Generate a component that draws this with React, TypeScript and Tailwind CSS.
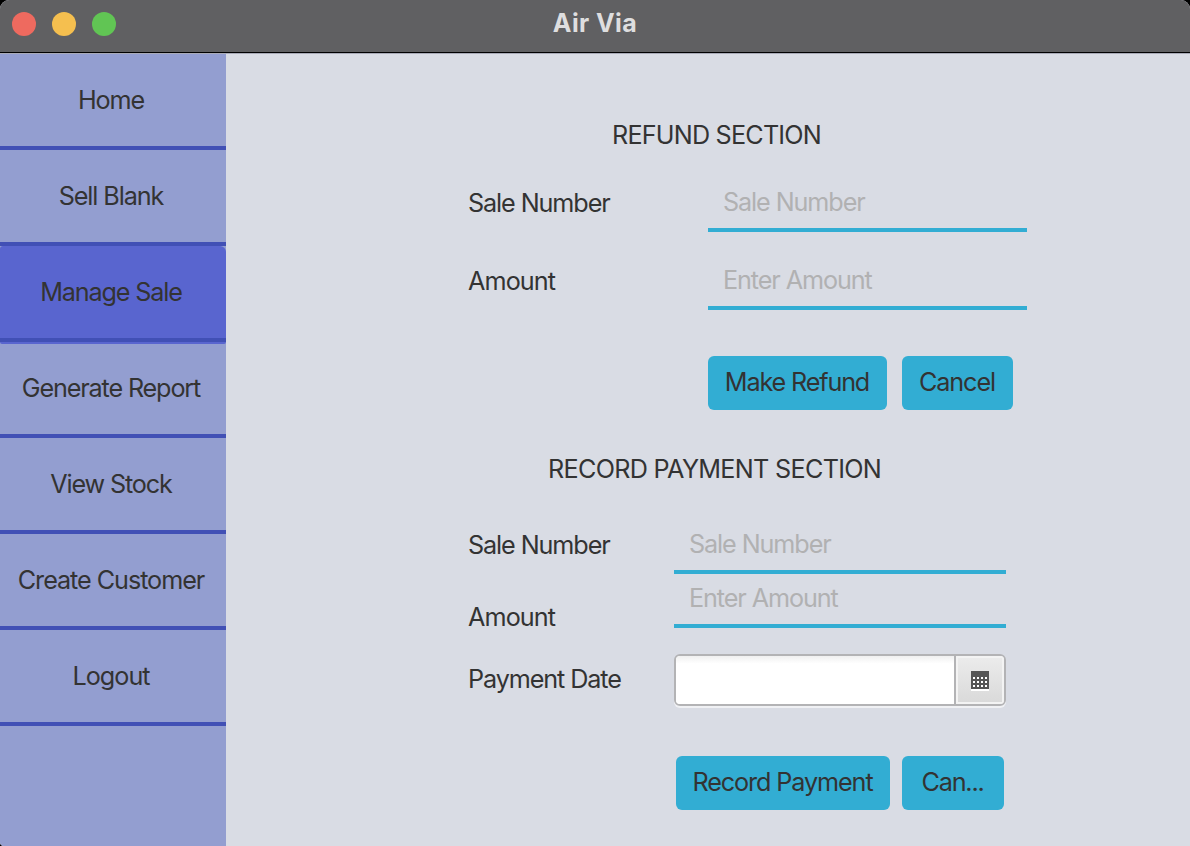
import React from 'react';

const navItems = [
  { label: 'Home', tracking: 'tracking-[-1.1px]' },
  { label: 'Sell Blank', tracking: 'tracking-[-1.1px]' },
  { label: 'Manage Sale', tracking: 'tracking-[-1.15px]', active: true },
  { label: 'Generate Report', tracking: 'tracking-[-1.15px]' },
  { label: 'View Stock', tracking: 'tracking-[-1.15px]' },
  { label: 'Create Customer', tracking: 'tracking-[-1.05px]' },
  { label: 'Logout', tracking: 'tracking-[-1px]' },
];

function TitleBar() {
  return (
    <header className="grid h-[53px] shrink-0 grid-cols-[1fr_auto_1fr] border-b border-black bg-[#606062]">
      <div className="flex items-center gap-4 pb-1 pl-3">
        <span className="size-6 rounded-full bg-[#ee6a5f]" />
        <span className="size-6 rounded-full bg-[#f5bf4f]" />
        <span className="size-6 rounded-full bg-[#61c554]" />
      </div>
      <h1 className="text-[25px] leading-[46px] font-bold tracking-[0.4px] text-[#dededf]">Air Via</h1>
    </header>
  );
}

function Sidebar() {
  return (
    <nav className="flex w-[226px] shrink-0 flex-col bg-[#939ed0]">
      {navItems.map((item) => (
        <div key={item.label} className="h-24 shrink-0">
          <button className={`block h-24 w-full border-b-4 border-[#4150b5] ${item.tracking}`}>
            <span
              className={`flex h-[92px] w-full items-center justify-center rounded-tl-[3px] rounded-tr-md pt-[2px] pr-1 ${
                item.active ? 'bg-[#5965cf]' : ''
              }`}
            >
              {item.label}
            </span>
          </button>
          {item.active && <div className="h-[2px] rounded-b-md bg-[#5965cf]" />}
        </div>
      ))}
    </nav>
  );
}

function Field({ placeholder }: { placeholder: string }) {
  return (
    <input
      placeholder={placeholder}
      className="block h-[54px] w-full border-b-4 border-[#32add3] bg-transparent pb-[2px] pl-[15px] tracking-[-1.1px] outline-none placeholder:text-[#b1b1b2]"
    />
  );
}

function ActionButton({ children, className }: { children: React.ReactNode; className: string }) {
  return (
    <button className={`flex h-[54px] items-center justify-center rounded-md bg-[#32add3] pr-px ${className}`}>
      {children}
    </button>
  );
}

function CalendarIcon() {
  return (
    <svg width="18" height="20" viewBox="0 0 18 20" shapeRendering="crispEdges">
      <rect y="2" width="18" height="18" fill="#fff" />
      <rect width="18" height="18" fill="#555" />
      {[6, 10, 14].map((y) =>
        [2, 6, 10, 14].map((x) => <rect key={`${x}-${y}`} x={x} y={y} width="2" height="2" fill="#fff" />),
      )}
    </svg>
  );
}

function DatePicker() {
  return (
    <div className="flex h-[52px] w-[332px] overflow-hidden rounded-md border-2 border-[#b3b3b5] bg-white shadow-[0_2px_0_#f0f1f4]">
      <input
        aria-label="Payment Date"
        className="w-[278px] bg-linear-to-b from-[#f0f0f0] from-0% to-white to-[16%] outline-none"
      />
      <button
        aria-label="Choose date"
        className="flex flex-1 items-center justify-center border-l-2 border-[#b3b3b5] bg-linear-to-b from-[#ececec] to-[#d9d9d9] pt-[2px] shadow-[inset_0_0_0_2px_#f3f3f3]"
      >
        <CalendarIcon />
      </button>
    </div>
  );
}

function RefundSection() {
  return (
    <section className="flex flex-col">
      <h2 className="pl-[386px] leading-8 tracking-[-0.8px]">REFUND SECTION</h2>
      <div className="mt-[27px] grid grid-cols-[240px_319px] gap-y-6 pl-[242px]">
        <label className="pt-[9px] leading-8 tracking-[-1.1px]">Sale Number</label>
        <Field placeholder="Sale Number" />
        <label className="pt-[9px] leading-8 tracking-[-0.9px]">Amount</label>
        <Field placeholder="Enter Amount" />
      </div>
      <div className="mt-[46px] flex gap-[15px] pl-[482px]">
        <ActionButton className="w-[179px] tracking-[-1.15px]">Make Refund</ActionButton>
        <ActionButton className="w-[111px] tracking-[-1.1px]">Cancel</ActionButton>
      </div>
    </section>
  );
}

function PaymentSection() {
  return (
    <section className="mt-[43px] flex flex-col">
      <h2 className="pl-[322px] leading-8 tracking-[-0.7px]">RECORD PAYMENT SECTION</h2>
      <div className="mt-[35px] grid grid-cols-[206px_332px] pl-[242px]">
        <label className="pt-[9px] leading-8 tracking-[-1.1px]">Sale Number</label>
        <Field placeholder="Sale Number" />
        <label className="pt-[27px] leading-8 tracking-[-0.9px]">Amount</label>
        <Field placeholder="Enter Amount" />
      </div>
      <div className="grid grid-cols-[206px_332px] pt-[21px] pl-[242px]">
        <label className="pt-[9px] leading-8 tracking-[-1.1px]">Payment Date</label>
        <DatePicker />
      </div>
      <div className="mt-[50px] flex gap-3 pl-[450px]">
        <ActionButton className="w-[214px] tracking-[-1.1px]">Record Payment</ActionButton>
        <ActionButton className="w-[102px] tracking-[-1.2px]">Can...</ActionButton>
      </div>
    </section>
  );
}

export default function App() {
  return (
    <div className="h-[846px] w-[1190px] bg-black">
      <div className="flex h-full flex-col overflow-hidden rounded-t-[9px] rounded-bl-[4px] bg-[#d9dce4] font-['Inter',sans-serif] text-[25.2px] text-[#333333]">
        <TitleBar />
        <div className="h-px shrink-0 bg-[#a9abb8]" />
        <div className="flex min-h-0 flex-1">
          <Sidebar />
          <main className="flex flex-1 flex-col pt-[65px]">
            <RefundSection />
            <PaymentSection />
          </main>
        </div>
      </div>
    </div>
  );
}
